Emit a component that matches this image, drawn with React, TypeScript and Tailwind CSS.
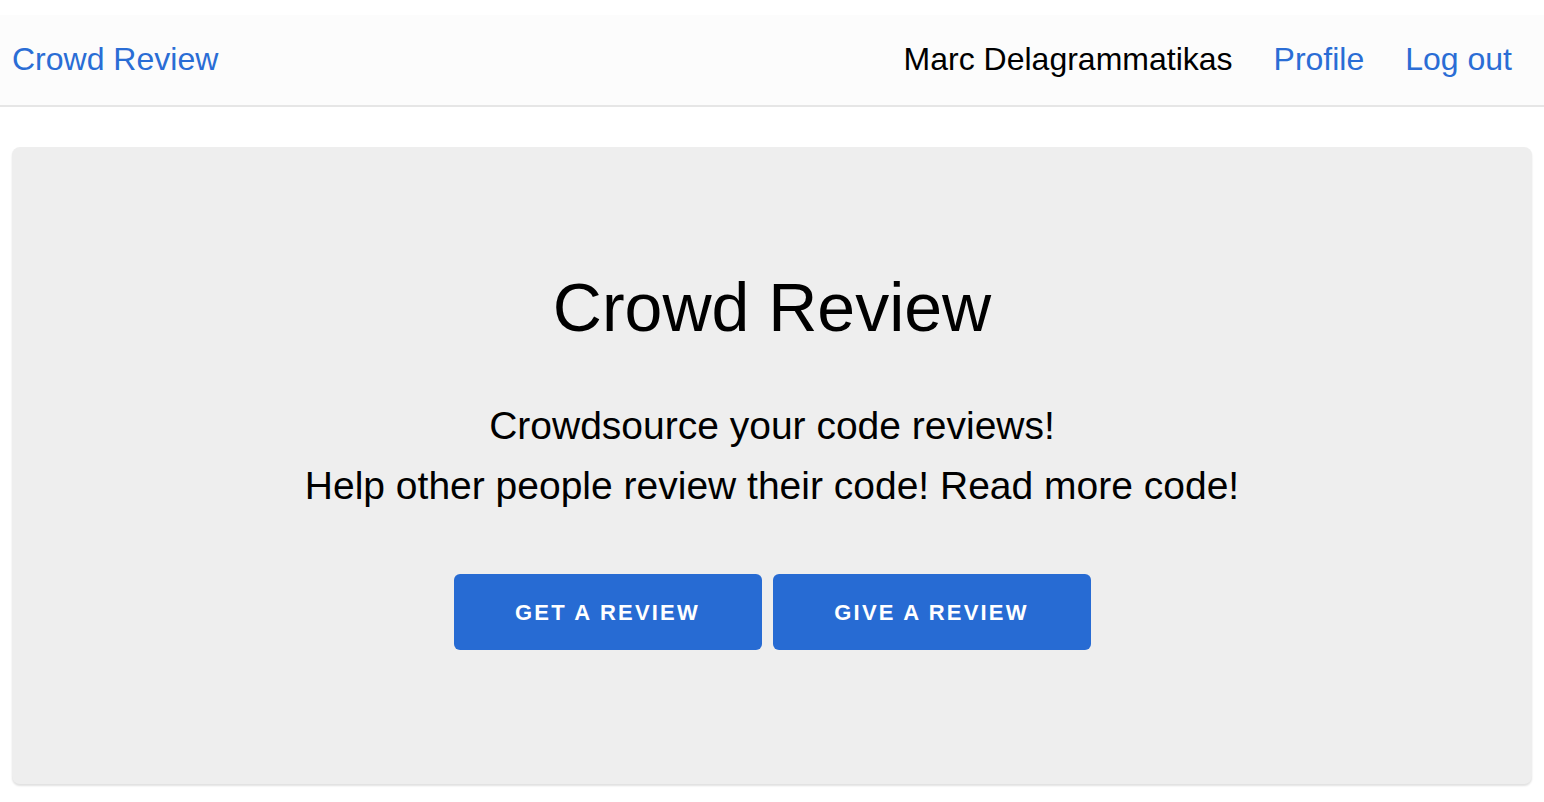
export default function App() {
  return (
    <div className="min-h-[802px] bg-white pt-[15px] font-['Liberation_Sans',Arial,sans-serif]">
      <header className="flex h-[92px] items-center justify-between border-b-2 border-[#e6e6e6] bg-[#fcfcfc] pb-[2px] pl-[12px] pr-[32px]">
        <a href="#" className="text-[32px] leading-none text-[#2a6dd5]">
          Crowd Review
        </a>
        <nav className="flex items-center gap-[41px] text-[32px] leading-none">
          <span className="text-black">Marc Delagrammatikas</span>
          <a href="#" className="text-[#2a6dd5]">
            Profile
          </a>
          <a href="#" className="text-[#2a6dd5]">
            Log out
          </a>
        </nav>
      </header>

      <main className="px-[12px] pt-[40px]">
        <section className="flex h-[637px] flex-col items-center rounded-[8px] bg-[#eeeeee] pt-[126px] shadow-[0_2px_2px_rgba(0,0,0,0.12)]">
          <h1 className="text-[68px] leading-none text-black">Crowd Review</h1>
          <p className="mt-[55px] text-center text-[39px] leading-[60px] text-black">
            Crowdsource your code reviews!
            <br />
            Help other people review their code! Read more code!
          </p>
          <div className="mt-[58px] flex gap-[11px]">
            <button
              type="button"
              className="h-[76px] w-[308px] rounded-[6px] bg-[#276bd3] text-[22px] font-bold tracking-[0.1em] text-white"
            >
              GET A REVIEW
            </button>
            <button
              type="button"
              className="h-[76px] w-[318px] rounded-[6px] bg-[#276bd3] text-[22px] font-bold tracking-[0.1em] text-white"
            >
              GIVE A REVIEW
            </button>
          </div>
        </section>
      </main>
    </div>
  );
}
